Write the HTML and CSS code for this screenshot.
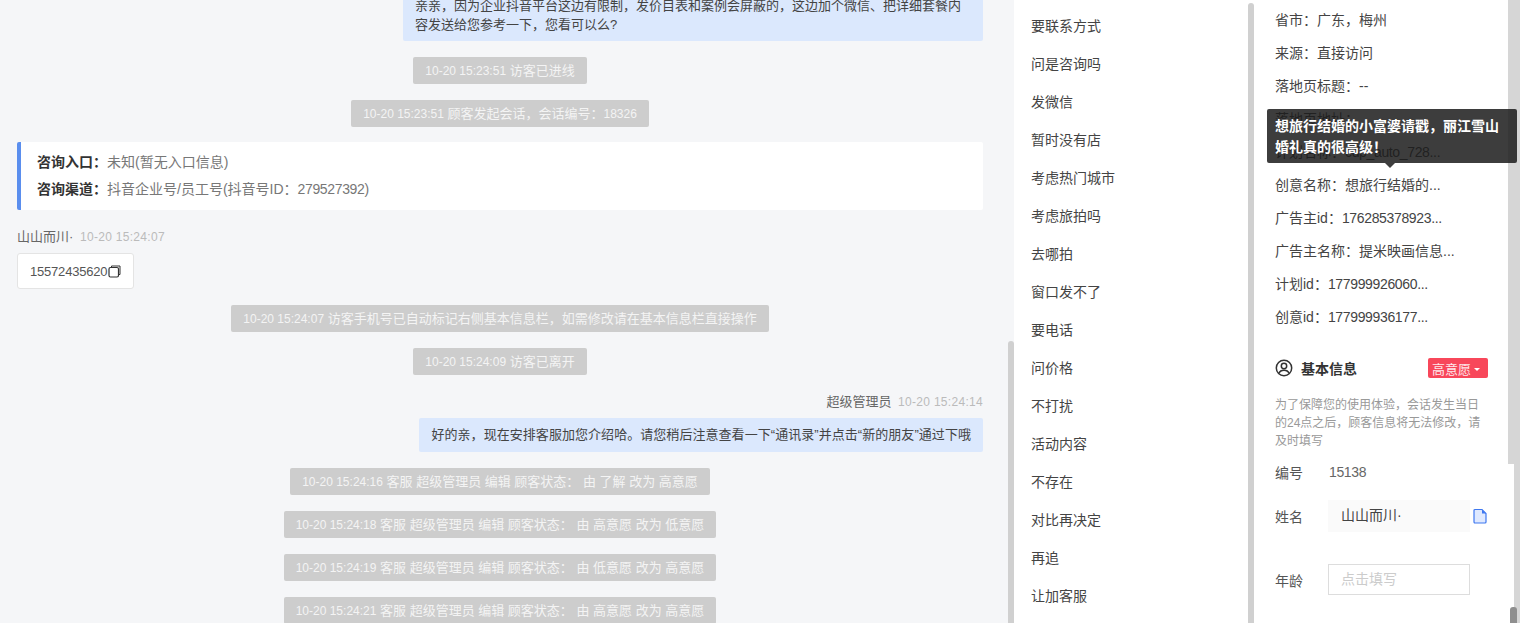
FILE: index.html
```html
<!DOCTYPE html>
<html lang="zh-CN">
<head>
<meta charset="utf-8">
<title>会话详情</title>
<link rel="stylesheet" href="styles.css">
</head>
<body>
<div class="app">
  <main class="chat">
    <div class="bubble bubble-first">亲亲，因为企业抖音平台这边有限制，发价目表和案例会屏蔽的，这边加个微信、把详细套餐内容发送给您参考一下，您看可以么?</div>
    <div class="sys"><span class="t">10-20 15:23:51</span> 访客已进线</div>
    <div class="sys"><span class="t">10-20 15:23:51</span> 顾客发起会话，会话编号：<span class="t">18326</span></div>
    <div class="entry">
      <p class="entry-line"><b>咨询入口：</b>未知(暂无入口信息)</p>
      <p class="entry-line"><b>咨询渠道：</b>抖音企业号/员工号(抖音号ID：<span class="n">279527392</span>)</p>
    </div>
    <div class="who">山山而川· <span class="when">10-20 15:24:07</span></div>
    <div class="phone"><span class="d">15572435620</span><svg class="copy" viewBox="0 0 13 13" width="13" height="13"><path d="M3.500 2.500V1h8.500v8.500h-1.500" fill="none" stroke="#333" stroke-width="1"/><rect x="1" y="2.500" width="9.500" height="9.500" rx="1.500" fill="#fff" stroke="#333" stroke-width="1.200"/></svg></div>
    <div class="sys"><span class="t">10-20 15:24:07</span> 访客手机号已自动标记右侧基本信息栏，如需修改请在基本信息栏直接操作</div>
    <div class="sys"><span class="t">10-20 15:24:09</span> 访客已离开</div>
    <div class="who who-right">超级管理员 <span class="when">10-20 15:24:14</span></div>
    <div class="bubble bubble-short">好的亲，现在安排客服加您介绍哈。请您稍后注意查看一下“通讯录”并点击“新的朋友”通过下哦</div>
    <div class="sys"><span class="t">10-20 15:24:16</span> 客服 超级管理员 编辑 顾客状态： 由 了解 改为 高意愿</div>
    <div class="sys"><span class="t">10-20 15:24:18</span> 客服 超级管理员 编辑 顾客状态： 由 高意愿 改为 低意愿</div>
    <div class="sys"><span class="t">10-20 15:24:19</span> 客服 超级管理员 编辑 顾客状态： 由 低意愿 改为 高意愿</div>
    <div class="sys"><span class="t">10-20 15:24:21</span> 客服 超级管理员 编辑 顾客状态： 由 高意愿 改为 高意愿</div>
    <div class="thumb-chat"></div>
  </main>

  <nav class="menu">
    <ul class="menu-list">
      <li>要联系方式</li>
      <li>问是咨询吗</li>
      <li>发微信</li>
      <li>暂时没有店</li>
      <li>考虑热门城市</li>
      <li>考虑旅拍吗</li>
      <li>去哪拍</li>
      <li>窗口发不了</li>
      <li>要电话</li>
      <li>问价格</li>
      <li>不打扰</li>
      <li>活动内容</li>
      <li>不存在</li>
      <li>对比再决定</li>
      <li>再追</li>
      <li>让加客服</li>
    </ul>
    <div class="thumb-menu"></div>
  </nav>

  <aside class="info">
    <ul class="facts">
      <li>省市：广东，梅州</li>
      <li>来源：直接访问</li>
      <li>落地页标题：--</li>
      <li>落地页地址：</li>
      <li>计划名称：<span class="n">cdp_auto_728...</span></li>
      <li>创意名称：想旅行结婚的...</li>
      <li>广告主id：<span class="n">176285378923...</span></li>
      <li>广告主名称：提米映画信息...</li>
      <li>计划id：<span class="n">177999926060...</span></li>
      <li>创意id：<span class="n">177999936177...</span></li>
    </ul>
    <div class="section-head">
      <svg class="user" viewBox="0 0 18 18" width="18" height="18"><circle cx="9" cy="9" r="7.700" fill="none" stroke="#333" stroke-width="1.500"/><circle cx="9" cy="7" r="2.700" fill="none" stroke="#333" stroke-width="1.500"/><path d="M4 14.200c.8-2.200 2.700-3 5-3s4.200.8 5 3" fill="none" stroke="#333" stroke-width="1.500"/></svg>
      <h2 class="section-title">基本信息</h2>
      <span class="badge">高意愿<i class="caret"></i></span>
    </div>
    <p class="note">为了保障您的使用体验，会话发生当日的24点之后，顾客信息将无法修改，请及时填写</p>
    <div class="row row-id"><span class="label">编号</span><span class="n">15138</span></div>
    <div class="row row-name">
      <span class="label">姓名</span>
      <span class="field">山山而川·</span>
      <svg class="doc" viewBox="0 0 14 16" width="14" height="16"><path d="M1 2.500a1 1 0 0 1 1-1h7l4 4v8.500a1 1 0 0 1-1 1H2a1 1 0 0 1-1-1z" fill="#dfe9ff" stroke="#3f78f0" stroke-width="1.200"/><path d="M9 1.500l4 4H9z" fill="#3f78f0"/></svg>
    </div>
    <div class="row row-age">
      <span class="label">年龄</span>
      <span class="field field-empty">点击填写</span>
    </div>
    <div class="rail-inner"></div>
    <div class="rail-outer"></div>
    <div class="thumb-info"></div>
    <div class="tooltip">想旅行结婚的小富婆请戳，丽江雪山婚礼真的很高级！</div>
  </aside>
</div>
</body>
</html>
```
FILE: styles.css
```css
* { box-sizing: border-box; }
html, body { margin: 0; height: 100%; overflow: hidden; }
body {
  font-family: "Liberation Sans", "Noto Sans CJK SC", sans-serif;
  color: #333;
  background: #f5f6f8;
}
.app { display: flex; width: 1520px; height: 623px; overflow: hidden; }

/* chat column */
.chat {
  position: relative;
  width: 1014px;
  flex: none;
  display: flex;
  flex-direction: column;
  padding: 0 31px 0 17px;
  font-size: 13px;
  overflow: hidden;
}
.t { font-size: 12px; }
.d { font-size: 13px; letter-spacing: -.2px; }
.n { letter-spacing: -.35px; }
.bubble {
  align-self: flex-end;
  background: #dbe8fd;
  border-radius: 2px;
  color: #444;
  line-height: 19px;
  padding: 8px 12px;
}
.bubble-first { width: 580px; margin-top: -12px; padding-bottom: 7px; flex: none; }
.bubble-short { margin-top: 7px; white-space: nowrap; padding: 7px 12px 8px; letter-spacing: .05px; }
.sys {
  align-self: center;
  flex: none;
  margin-top: 16px;
  height: 27px;
  line-height: 27px;
  padding: 0 12px;
  background: #cdcdcd;
  border-radius: 2px;
  color: #f4f4f4;
  white-space: nowrap;
}
.entry {
  flex: none;
  margin-top: 15px;
  height: 68px;
  padding: 7px 0 0 16px;
  background: #fff;
  border-left: 4px solid #5a8eee;
  border-radius: 2px;
  color: #777;
  font-size: 14px;
}
.entry-line { margin: 0; height: 27px; line-height: 27px; }
.entry-line b { color: #333; font-weight: 700; }
.who { flex: none; margin-top: 18px; height: 18px; line-height: 18px; color: #666; }
.who-right { text-align: right; }
.when { font-size: 12px; color: #bbb; margin-left: 3px; letter-spacing: .3px; }
.phone {
  align-self: flex-start;
  flex: none;
  display: flex;
  align-items: center;
  margin-top: 7px;
  width: 117px;
  height: 36px;
  padding-left: 12px;
  background: #fff;
  border: 1px solid #e4e4e4;
  border-radius: 3px;
  color: #555;
}
.copy { flex: none; margin-left: 1px; }
.thumb-chat {
  position: absolute;
  left: 1008px;
  top: 341px;
  width: 6px;
  height: 300px;
  background: #d0d0d0;
  border-radius: 3px 3px 0 0;
}

/* quick reply list */
.menu { width: 240px; flex: none; display: flex; background: #fff; overflow: hidden; }
.menu-list {
  list-style: none;
  flex: 1;
  margin: 7px 0 0;
  padding: 0 0 0 17px;
  font-size: 14px;
  color: #444;
}
.menu-list li { height: 38px; line-height: 38px; }
.thumb-menu {
  flex: none;
  width: 6px;
  margin-top: 3px;
  background: #d0d0d0;
  border-radius: 3px 3px 0 0;
}

/* info column */
.info {
  position: relative;
  width: 266px;
  flex: none;
  background: #fff;
  padding: 4px 0 0 21px;
  font-size: 14px;
  color: #444;
  overflow: hidden;
}
.facts { list-style: none; margin: 0; padding: 0; }
.facts li { height: 33px; line-height: 33px; white-space: nowrap; }
.section-head {
  display: flex;
  align-items: center;
  margin-top: 23px;
  width: 213px;
  height: 22px;
}
.user { flex: none; }
.section-title { margin: 0 0 0 8px; font-size: 14px; font-weight: 700; color: #333; flex: 1; }
.badge {
  display: flex;
  align-items: center;
  width: 60px;
  height: 20px;
  padding-left: 4px;
  background: #f8475a;
  border-radius: 2px;
  color: #ffe8ea;
  font-size: 13px;
}
.caret {
  margin: 2px 0 0 3px;
  border: 3.500px solid transparent;
  border-top-color: #fff;
  border-bottom: 0;
}
.note {
  margin: 17px 0 0;
  width: 212px;
  font-size: 12px;
  line-height: 18px;
  color: #999;
}
.row { display: flex; align-items: center; }
.label { width: 53px; flex: none; color: #555; font-size: 14px; }
.row-id { margin-top: 12px; height: 20px; }
.row-id .n { margin-left: 1px; color: #666; }
.row-name { margin-top: 18px; height: 32px; }
.row-age { margin-top: 32px; height: 31px; }
.field {
  width: 142px;
  height: 100%;
  padding-left: 13px;
  line-height: 31px;
  background: #fafafa;
  color: #444;
}
.field-empty {
  background: #fff;
  border: 1px solid #ddd;
  color: #ccc;
  padding-left: 12px;
  line-height: 29px;
}
.doc { flex: none; margin-left: 3px; }
.rail-inner { position: absolute; left: 254px; top: 0; width: 6px; height: 464px; background: #d6d6d6; }
.rail-outer { position: absolute; left: 260px; top: 0; width: 6px; height: 623px; background: #d6d6d6; }
.thumb-info {
  position: absolute;
  left: 256px;
  top: 607px;
  width: 7px;
  height: 20px;
  background: #8f8f8f;
  border-radius: 3px 3px 0 0;
}
.tooltip {
  position: absolute;
  left: 13px;
  top: 109px;
  width: 250px;
  height: 54px;
  padding: 7px 8px 0;
  background: rgba(27, 27, 27, .85);
  border-radius: 2px;
  color: #fff;
  font-weight: 700;
  line-height: 21px;
}
.tooltip::after {
  content: "";
  position: absolute;
  left: 118px;
  top: 54px;
  border: 5px solid transparent;
  border-top-color: rgba(27, 27, 27, .85);
  border-bottom: 0;
}
```
